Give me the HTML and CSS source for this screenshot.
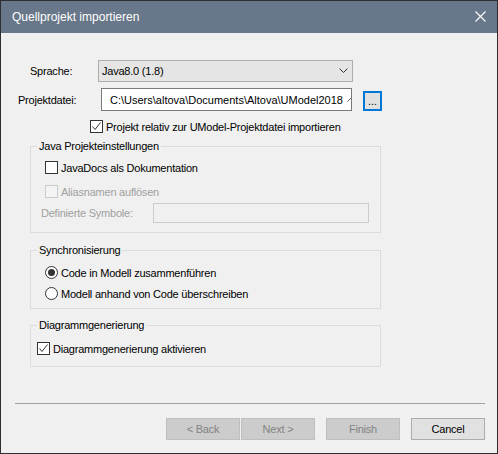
FILE: index.html
```html
<!DOCTYPE html>
<html lang="de">
<head>
<meta charset="utf-8">
<title>Quellprojekt importieren</title>
<link rel="stylesheet" href="styles.css">
</head>
<body>
<div class="window">
  <div class="titlebar">
    <span class="title">Quellprojekt importieren</span>
    <svg class="close" width="11" height="11" viewBox="0 0 11 11"><path d="M0.5 0.5 L10.5 10.5 M10.5 0.5 L0.5 10.5" stroke="#fff" stroke-width="1.1" fill="none"/></svg>
  </div>
  <div class="content">
    <div class="row-lang">
      <span class="label-lang">Sprache:</span>
      <div class="select">
        <span>Java8.0 (1.8)</span>
        <svg width="9" height="6" viewBox="0 0 9 6"><path d="M0.5 0.5 L4.5 4.5 L8.5 0.5" stroke="#333" stroke-width="1" fill="none"/></svg>
      </div>
    </div>
    <div class="row-file">
      <span class="label-file">Projektdatei:</span>
      <div class="file-input">
        <span class="file-text">C:\Users\altova\Documents\Altova\UModel2018</span>
        <svg class="file-mark" width="5" height="5" viewBox="0 0 5 5"><path d="M0.5 4.5 L4.5 0.5" stroke="#666" stroke-width="1" fill="none"/></svg>
      </div>
      <button class="browse">...</button>
    </div>
    <div class="row-relative">
      <span class="cb"><svg width="11" height="11" viewBox="0 0 11 11"><path d="M1.5 5.5 L4 8.5 L9.5 1.5" stroke="#333" stroke-width="1" fill="none"/></svg></span>
      <span>Projekt relativ zur UModel-Projektdatei importieren</span>
    </div>

    <fieldset class="group group-java">
      <legend>Java Projekteinstellungen</legend>
      <div class="check-row first">
        <span class="cb"></span><span>JavaDocs als Dokumentation</span>
      </div>
      <div class="check-row second disabled">
        <span class="cb"></span><span>Aliasnamen auflösen</span>
      </div>
      <div class="symbol-row disabled">
        <span class="symbol-label">Definierte Symbole:</span>
        <div class="symbol-input"></div>
      </div>
    </fieldset>

    <fieldset class="group group-sync">
      <legend>Synchronisierung</legend>
      <div class="radio-row"><span class="radio checked"><span class="dot"></span></span><span>Code in Modell zusammenführen</span></div>
      <div class="radio-row"><span class="radio"></span><span>Modell anhand von Code überschreiben</span></div>
    </fieldset>

    <fieldset class="group group-diag">
      <legend>Diagrammgenerierung</legend>
      <div class="radio-row">
        <span class="cb"><svg width="11" height="11" viewBox="0 0 11 11"><path d="M1.5 5.5 L4 8.5 L9.5 1.5" stroke="#333" stroke-width="1" fill="none"/></svg></span>
        <span>Diagrammgenerierung aktivieren</span>
      </div>
    </fieldset>
  </div>
  <div class="footer">
    <div class="separator"></div>
    <div class="buttons">
      <button class="btn disabled">&lt; Back</button>
      <button class="btn disabled next">Next &gt;</button>
      <button class="btn disabled gap">Finish</button>
      <button class="btn gap">Cancel</button>
    </div>
  </div>
</div>
</body>
</html>
```

FILE: styles.css
```css
* { box-sizing: border-box; }

body {
  margin: 0;
  font-family: "Liberation Sans", Arial, sans-serif;
  font-size: 11px;
  color: #000;
  background: #fff;
}

.window {
  width: 498px;
  height: 454px;
  border: 1px solid #2e2e2e;
  background: #f0f0f0;
  display: flex;
  flex-direction: column;
}

.titlebar {
  height: 32px;
  flex: none;
  background: #687789;
  color: #fff;
  display: flex;
  align-items: center;
  justify-content: space-between;
  padding: 0 11px 1px 11px;
  font-size: 12px;
}

.content {
  flex: 1;
  padding-top: 27px;
  letter-spacing: -0.22px;
}

.row-lang {
  display: flex;
  align-items: center;
  height: 22px;
}

.label-lang {
  margin-left: 29px;
  width: 68px;
}

.select {
  width: 255px;
  height: 22px;
  border: 1px solid #adadad;
  background: #e5e5e5;
  display: flex;
  align-items: center;
  justify-content: space-between;
  padding: 0 4px 0 3px;
}

.row-file {
  display: flex;
  align-items: flex-end;
  margin-top: 6px;
}

.label-file {
  margin-left: 17px;
  width: 83px;
  align-self: center;
}

.file-input {
  width: 251px;
  height: 23px;
  border: 1px solid #7a7a7a;
  background: #fff;
  padding-left: 8px;
  display: flex;
  align-items: center;
  overflow: hidden;
}

.file-text {
  width: 234px;
  flex: none;
  white-space: nowrap;
  overflow: hidden;
  letter-spacing: 0;
}

.file-mark {
  margin-left: 3px;
  flex: none;
}

.browse {
  margin: 0 0 0 11px;
  width: 19px;
  height: 20px;
  border: 2px solid #0078d7;
  background: #e1e1e1;
  padding: 0;
  font-family: inherit;
  font-size: 11px;
  line-height: 12px;
  display: flex;
  align-items: flex-end;
  justify-content: center;
  padding-bottom: 2px;
}

.row-relative {
  margin-top: 7px;
  padding-left: 89px;
  height: 17px;
  display: flex;
  align-items: center;
}

.cb {
  width: 13px;
  height: 13px;
  flex: none;
  border: 1px solid #333;
  background: #fff;
  margin-right: 3px;
  display: flex;
  align-items: center;
  justify-content: center;
}

.disabled { color: #a0a0a0; }
.disabled .cb { border-color: #cccccc; background: #f4f4f4; }

.group {
  margin: 0 0 0 29px;
  width: 351px;
  border: 1px solid #dcdcdc;
  padding: 0;
  min-width: 0;
}

.group legend {
  margin-left: 6px;
  padding: 0 2px;
  line-height: 14px;
  font-size: 11px;
}

.group-java {
  margin-top: 4px;
  padding-bottom: 9px;
}

.check-row {
  height: 17px;
  display: flex;
  align-items: center;
  padding-left: 14px;
}

.check-row.first { margin-top: 6px; }
.check-row.second { margin-top: 7px; }

.symbol-row {
  margin-top: 3px;
  display: flex;
  align-items: center;
  padding-left: 10px;
}

.symbol-label { width: 112px; }

.symbol-input {
  width: 216px;
  height: 20px;
  border: 1px solid #cccccc;
  background: #f0f0f0;
}

.group-sync {
  margin-top: 10px;
  padding-top: 5px;
  padding-bottom: 4px;
}

.radio-row {
  height: 21px;
  display: flex;
  align-items: center;
  padding-left: 14px;
}

.radio {
  width: 13px;
  height: 13px;
  flex: none;
  border: 1px solid #333;
  border-radius: 50%;
  background: #fff;
  margin-right: 3px;
  display: flex;
  align-items: center;
  justify-content: center;
}

.radio .dot {
  width: 7px;
  height: 7px;
  border-radius: 50%;
  background: #333;
}

.group-diag {
  margin-top: 9px;
  padding-top: 6px;
  padding-bottom: 7px;
}

.group-diag .radio-row { padding-left: 6px; }

.footer {
  flex: none;
  letter-spacing: -0.22px;
}

.separator {
  margin: 0 12px 0 14px;
  height: 1px;
  background: #a0a0a0;
}

.buttons {
  margin-top: 14px;
  padding: 0 12px 13px 0;
  display: flex;
  justify-content: flex-end;
}

.btn {
  width: 74px;
  height: 22px;
  margin: 0;
  padding: 0;
  border: 1px solid #adadad;
  background: #e1e1e1;
  color: #000;
  font-family: inherit;
  font-size: 11px;
  letter-spacing: inherit;
}

.btn.disabled {
  border-color: #bfbfbf;
  background: #cccccc;
  color: #838383;
}

.btn.next { margin-left: 1px; }
.btn.gap { margin-left: 11px; }
```
